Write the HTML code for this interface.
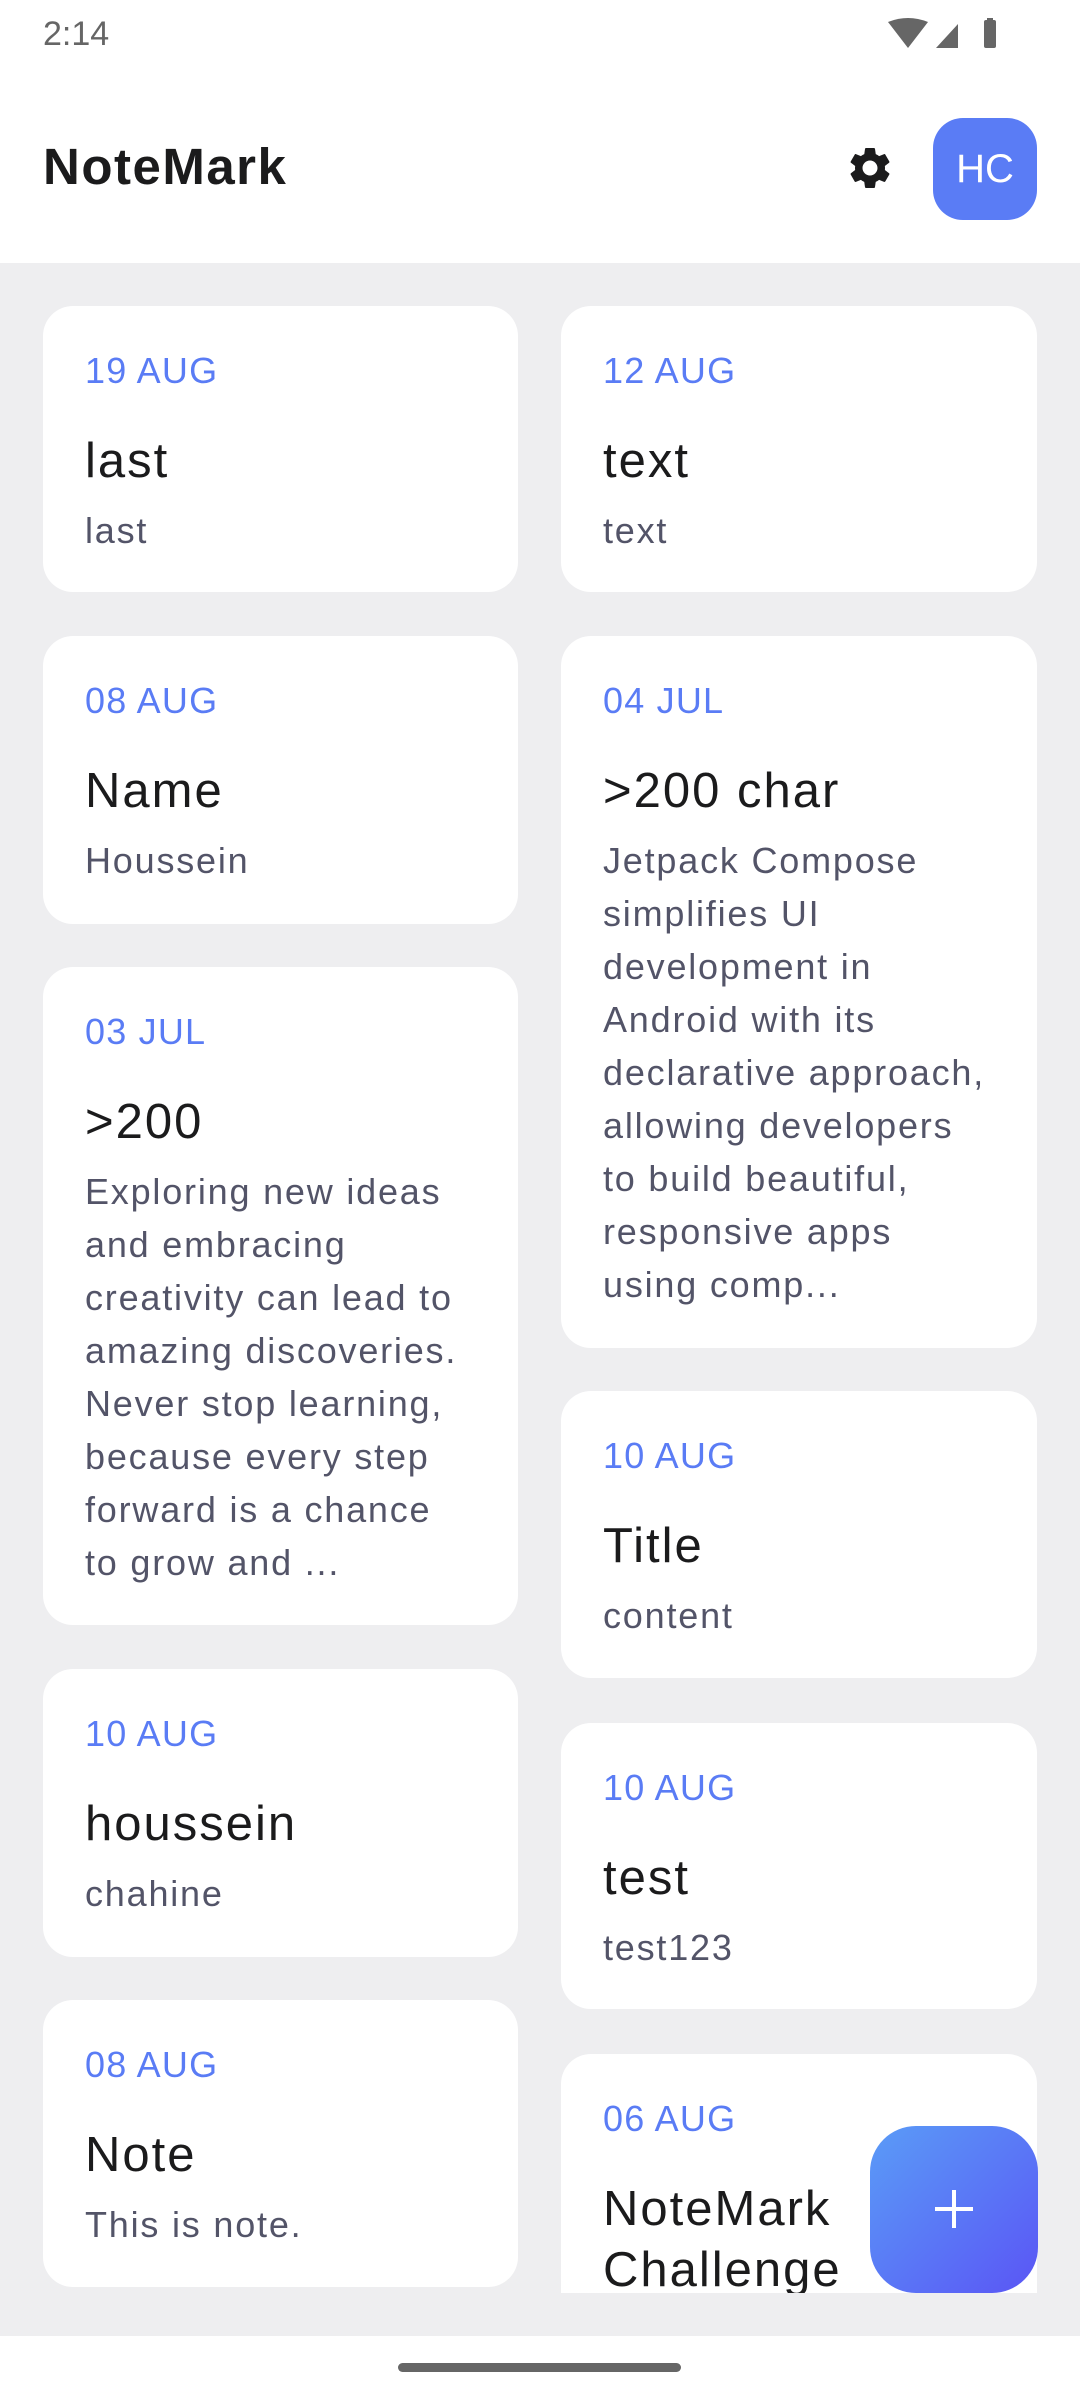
<!DOCTYPE html>
<html><head><meta charset="utf-8"><style>
*{margin:0;padding:0;box-sizing:border-box}
body{width:1080px;height:2400px;position:relative;overflow:hidden;background:#eeeef0;font-family:"Liberation Sans",sans-serif}
.top{position:absolute;left:0;top:0;width:1080px;height:263px;background:#fff}
.bot{position:absolute;left:0;top:2336px;width:1080px;height:64px;background:#fff}
.handle{position:absolute;left:398px;top:2363px;width:283px;height:9px;border-radius:5px;background:#666}
.card{position:absolute;background:#fff;border-radius:30px;overflow:hidden}
.L{left:43px;width:475px}.R{left:561px;width:476px}
.d{position:absolute;left:42px;top:45px;font-size:36px;line-height:40px;color:#5a7cf5;letter-spacing:1.2px;white-space:nowrap}
.t{position:absolute;left:42px;top:125px;font-size:49px;line-height:61px;color:#1b1b1c;letter-spacing:2px;white-space:nowrap}
.b{position:absolute;left:42px;top:198px;font-size:36px;line-height:53px;color:#535468;letter-spacing:1.8px;white-space:nowrap}
</style></head><body>
<div class="top"></div>
<div style="position:absolute;left:43px;top:15px;font-size:34px;color:#666">2:14</div>
<svg style="position:absolute;left:888px;top:18px" width="110" height="32" viewBox="0 0 110 32">
<path d="M0 4 Q20 -4 40 4 L20 30 Z" fill="#666"/>
<path d="M48 30 L70 6 L70 30 Z" fill="#666"/>
<rect x="96" y="2" width="12" height="28" rx="2" fill="#666"/><rect x="99" y="0" width="6" height="4" fill="#666"/>
</svg>
<div style="position:absolute;left:43px;top:138px;font-size:51px;font-weight:bold;color:#1b1b1c;line-height:58px;letter-spacing:1.5px">NoteMark</div>
<svg style="position:absolute;left:845px;top:143px" width="50" height="50" viewBox="0 0 24 24"><path fill="#1b1b1c" d="M19.14 12.94c.04-.3.06-.61.06-.94 0-.32-.02-.64-.07-.94l2.03-1.58a.49.49 0 0 0 .12-.61l-1.92-3.32a.488.488 0 0 0-.59-.22l-2.39.96c-.5-.38-1.030-.7-1.62-.94l-.36-2.54a.484.484 0 0 0-.48-.41h-3.84c-.24 0-.43.17-.47.41l-.36 2.54c-.59.24-1.13.57-1.62.94l-2.39-.96c-.22-.08-.47 0-.59.22L2.74 8.87c-.12.21-.08.47.12.61l2.03 1.58c-.05.3-.09.63-.09.94s.02.64.07.94l-2.03 1.58a.49.49 0 0 0-.12.61l1.92 3.32c.12.22.37.29.59.22l2.390-.96c.5.38 1.03.7 1.62.94l.36 2.54c.05.24.24.41.48.41h3.84c.24 0 .44-.17.47-.41l.36-2.54c.59-.24 1.13-.56 1.62-.94l2.39.96c.22.08.47 0 .59-.22l1.92-3.32c.12-.22.07-.47-.12-.61l-2.01-1.58zM12 15.6c-1.98 0-3.6-1.62-3.6-3.6s1.62-3.6 3.6-3.6 3.6 1.62 3.6 3.6-1.62 3.6-3.6 3.6z"/></svg>
<div style="position:absolute;left:933px;top:118px;width:104px;height:102px;border-radius:30px;background:#5a7cf5;color:#fff;font-size:40px;line-height:102px;text-align:center">HC</div>

<div class="card L" style="top:306px;height:286px"><div class="d">19 AUG</div><div class="t">last</div><div class="b">last</div></div>
<div class="card R" style="top:306px;height:286px"><div class="d">12 AUG</div><div class="t">text</div><div class="b">text</div></div>
<div class="card L" style="top:636px;height:288px"><div class="d">08 AUG</div><div class="t">Name</div><div class="b">Houssein</div></div>
<div class="card R" style="top:636px;height:712px"><div class="d">04 JUL</div><div class="t">&gt;200 char</div><div class="b">Jetpack Compose<br>simplifies UI<br>development in<br>Android with its<br>declarative approach,<br>allowing developers<br>to build beautiful,<br>responsive apps<br>using comp...</div></div>
<div class="card L" style="top:967px;height:658px"><div class="d">03 JUL</div><div class="t">&gt;200</div><div class="b">Exploring new ideas<br>and embracing<br>creativity can lead to<br>amazing discoveries.<br>Never stop learning,<br>because every step<br>forward is a chance<br>to grow and ...</div></div>
<div class="card R" style="top:1391px;height:287px"><div class="d">10 AUG</div><div class="t">Title</div><div class="b">content</div></div>
<div class="card L" style="top:1669px;height:288px"><div class="d">10 AUG</div><div class="t">houssein</div><div class="b">chahine</div></div>
<div class="card R" style="top:1723px;height:286px"><div class="d">10 AUG</div><div class="t">test</div><div class="b">test123</div></div>
<div class="card L" style="top:2000px;height:287px"><div class="d">08 AUG</div><div class="t">Note</div><div class="b">This is note.</div></div>
<div class="card R" style="top:2054px;height:239px;border-radius:30px 30px 0 0"><div class="d">06 AUG</div><div class="t">NoteMark<br>Challenge</div></div>
<div style="position:absolute;left:870px;top:2126px;width:168px;height:167px;border-radius:46px;background:linear-gradient(135deg,#5a9cf7,#5a55f5)"></div>
<div style="position:absolute;left:935px;top:2207px;width:38px;height:4px;background:#fff"></div>
<div style="position:absolute;left:952px;top:2190px;width:4px;height:38px;background:#fff"></div>
<div class="bot"></div><div class="handle"></div>
</body></html>
